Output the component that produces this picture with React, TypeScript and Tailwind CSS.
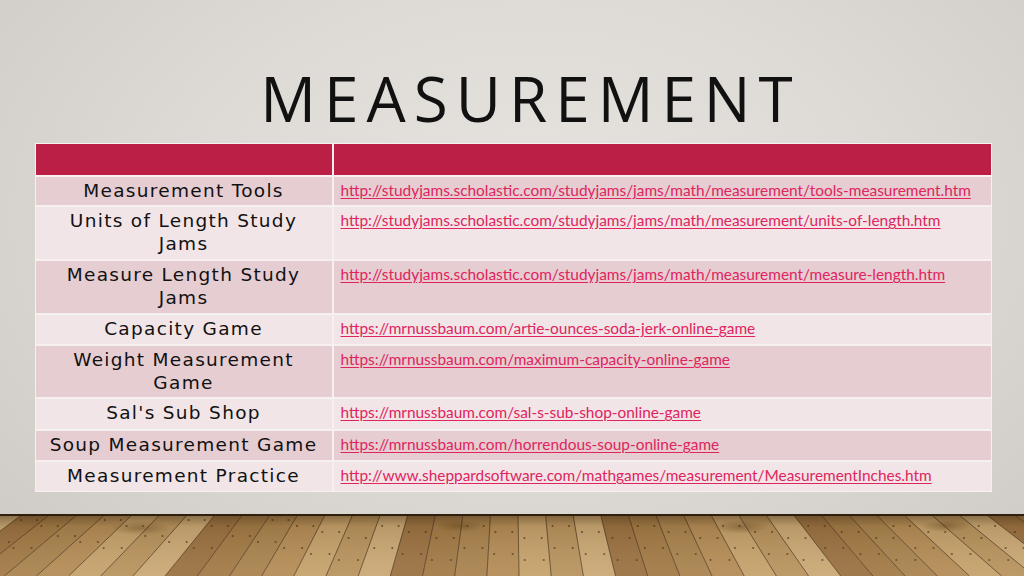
import React from "react";

type Row = { label: string[]; url: string; h: string; dark: boolean };

const rows: Row[] = [
  { label: ["Measurement Tools"], url: "http://studyjams.scholastic.com/studyjams/jams/math/measurement/tools-measurement.htm", h: "h-[28px]", dark: true },
  { label: ["Units of Length Study", "Jams"], url: "http://studyjams.scholastic.com/studyjams/jams/math/measurement/units-of-length.htm", h: "h-[52px]", dark: false },
  { label: ["Measure Length Study", "Jams"], url: "http://studyjams.scholastic.com/studyjams/jams/math/measurement/measure-length.htm", h: "h-[52px]", dark: true },
  { label: ["Capacity Game"], url: "https://mrnussbaum.com/artie-ounces-soda-jerk-online-game", h: "h-[29px]", dark: false },
  { label: ["Weight Measurement", "Game"], url: "https://mrnussbaum.com/maximum-capacity-online-game", h: "h-[51px]", dark: true },
  { label: ["Sal's Sub Shop"], url: "https://mrnussbaum.com/sal-s-sub-shop-online-game", h: "h-[30px]", dark: false },
  { label: ["Soup Measurement Game"], url: "https://mrnussbaum.com/horrendous-soup-online-game", h: "h-[29px]", dark: true },
  { label: ["Measurement Practice"], url: "http://www.sheppardsoftware.com/mathgames/measurement/MeasurementInches.htm", h: "h-[29px]", dark: false },
];

function Floor() {
  const H = 62;
  const k = 1.17;
  const palette = ["#b8935c", "#a27a45", "#c6a26b", "#9a7140", "#b48c55", "#caa874", "#a9834e"];
  const planks: React.ReactNode[] = [];
  const lines: React.ReactNode[] = [];
  const dots: React.ReactNode[] = [];
  for (let i = -24; i <= 24; i++) {
    const x0 = 512 + i * 27.5 + 6;
    const x1 = x0 + 27.5;
    const b0 = 512 + (x0 - 512) * k;
    const b1 = 512 + (x1 - 512) * k;
    const c = palette[((i * 5 + 100) % palette.length + palette.length) % palette.length];
    planks.push(<polygon key={"p" + i} points={`${x0},0 ${x1},0 ${b1},${H} ${b0},${H}`} fill={c} />);
    lines.push(<line key={"l" + i} x1={x0} y1={0} x2={b0} y2={H} stroke="#4a3218" strokeWidth={1} opacity={0.75} />);
    const yA = 12 + ((i * 7 + 50) % 3) * 6;
    const yB = yA + 22;
    [yA, yB].forEach((y, j) => {
      const t = y / H;
      const xa = x0 + (b0 - x0) * t + 6;
      const xb = x1 + (b1 - x1) * t - 6;
      dots.push(<circle key={`d${i}-${j}a`} cx={xa} cy={y} r={1.1} fill="#4a3218" opacity={0.7} />);
      dots.push(<circle key={`d${i}-${j}b`} cx={xb} cy={y} r={1.1} fill="#4a3218" opacity={0.7} />);
    });
  }
  return (
    <svg width="1024" height={H} viewBox={`0 0 1024 ${H}`} className="block">
      <defs>
        <linearGradient id="shade" x1="0" y1="0" x2="0" y2="1">
          <stop offset="0" stopColor="#3b2812" stopOpacity="0.5" />
          <stop offset="0.2" stopColor="#3b2812" stopOpacity="0.12" />
          <stop offset="1" stopColor="#ffffff" stopOpacity="0.06" />
        </linearGradient>
        <radialGradient id="knots" cx="0.5" cy="0.5" r="0.5">
          <stop offset="0" stopColor="#6b4a22" stopOpacity="0.5" />
          <stop offset="1" stopColor="#6b4a22" stopOpacity="0" />
        </radialGradient>
      </defs>
      {planks}
      <ellipse cx="140" cy="14" rx="30" ry="7" fill="url(#knots)" />
      <ellipse cx="460" cy="12" rx="25" ry="6" fill="url(#knots)" />
      <ellipse cx="740" cy="13" rx="28" ry="7" fill="url(#knots)" />
      <ellipse cx="945" cy="12" rx="25" ry="6" fill="url(#knots)" />
      {lines}
      {dots}
      <rect x="0" y="0" width="1024" height={H} fill="url(#shade)" />
      <rect x="0" y="0" width="1024" height="2" fill="#2e1f0e" />
    </svg>
  );
}

export default function App() {
  return (
    <div className="w-[1024px] h-[576px] flex flex-col overflow-hidden bg-[radial-gradient(ellipse_at_52%_38%,#e7e4e0_0%,#dedbd6_45%,#cdc9c3_100%)]">
      <div className="flex-1 flex flex-col items-center">
        <h1
          className="mt-[67px] h-[62px] leading-[62px] text-[62px] font-normal tracking-[8px] text-[#111] pl-[37px]"
          style={{ fontFamily: '"Open Sans", sans-serif' }}
        >
          MEASUREMENT
        </h1>
        <div className="mt-[14px] ml-[2px] w-[957px] bg-[#f6f0f1] p-[1px] flex flex-col gap-[2px]">
          <div className="grid grid-cols-[296px_1fr] gap-[2px] h-[31px]">
            <div className="bg-[#bb1f45]" />
            <div className="bg-[#bb1f45]" />
          </div>
          {rows.map((r, i) => (
            <div key={i} className={`grid grid-cols-[296px_1fr] gap-[2px] ${r.h}`}>
              <div
                className={`${r.dark ? "bg-[#e5cdd1]" : "bg-[#f1e5e7]"} text-center pt-[2px] text-[18.5px] leading-[23px] tracking-[1.3px] text-[#111]`}
                style={{ fontFamily: '"DejaVu Sans", sans-serif' }}
              >
                {r.label.map((l, j) => (
                  <div key={j} className="whitespace-nowrap">{l}</div>
                ))}
              </div>
              <div className={`${r.dark ? "bg-[#e5cdd1]" : "bg-[#f1e5e7]"} pl-[7px] pt-[1px]`}>
                <span
                  className="text-[15.4px] leading-[20px] text-[#e0245e] underline underline-offset-2 whitespace-nowrap"
                  style={{ fontFamily: "Lato, sans-serif" }}
                >
                  {r.url}
                </span>
              </div>
            </div>
          ))}
        </div>
      </div>
      <Floor />
    </div>
  );
}
